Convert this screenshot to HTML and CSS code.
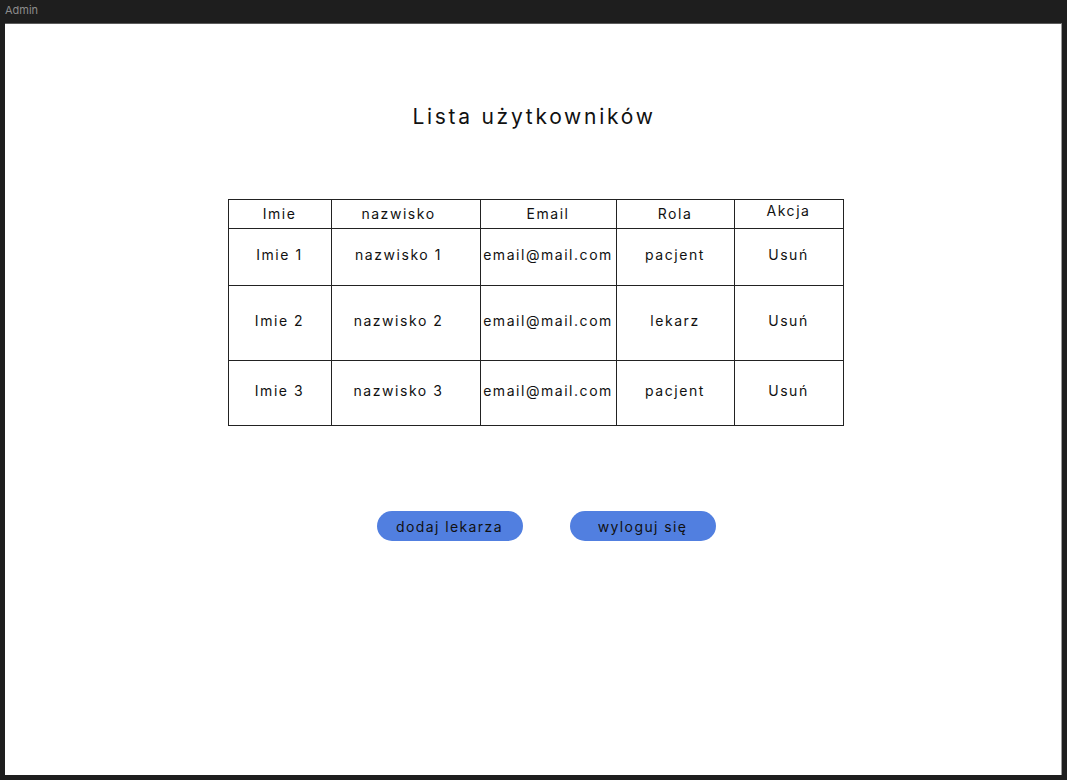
FILE: index.html
```html
<!DOCTYPE html>
<html lang="pl">
<head>
<meta charset="utf-8">
<title>Admin</title>
<link rel="stylesheet" href="styles.css">
</head>
<body>
<div class="label">Admin</div>
<main class="frame">
  <h1 class="title">Lista użytkowników</h1>
  <div class="table">
    <div class="cell head">Imie</div>
    <div class="cell head c2">nazwisko</div>
    <div class="cell head">Email</div>
    <div class="cell head">Rola</div>
    <div class="cell head up">Akcja</div>

    <div class="cell">Imie 1</div>
    <div class="cell c2">nazwisko 1</div>
    <div class="cell">email@mail.com</div>
    <div class="cell">pacjent</div>
    <div class="cell">Usuń</div>

    <div class="cell">Imie 2</div>
    <div class="cell c2">nazwisko 2</div>
    <div class="cell">email@mail.com</div>
    <div class="cell">lekarz</div>
    <div class="cell">Usuń</div>

    <div class="cell">Imie 3</div>
    <div class="cell c2">nazwisko 3</div>
    <div class="cell">email@mail.com</div>
    <div class="cell">pacjent</div>
    <div class="cell">Usuń</div>
  </div>
  <div class="actions">
    <button class="btn">dodaj lekarza</button>
    <button class="btn">wyloguj się</button>
  </div>
</main>
</body>
</html>
```

FILE: styles.css
```css
* { box-sizing: border-box; }
html, body { margin: 0; padding: 0; }
body {
  background: #1e1e1e;
  width: 1067px;
  height: 780px;
  overflow: hidden;
  font-family: Inter, "Noto Sans", sans-serif;
}
.label {
  height: 23px;
  padding: 4px 0 0 5px;
  font-size: 11px;
  color: #8c8c8c;
  line-height: 13px;
}
.frame {
  margin-left: 5px;
  width: 1057px;
  height: 752px;
  background: #fff;
  border-top: 1px solid #5c5c5c;
  border-right: 1px solid #9a9a9a;
  display: flex;
  flex-direction: column;
  align-items: center;
  padding-top: 77px;
}
.title {
  margin: 0;
  font-size: 21px;
  font-weight: 400;
  letter-spacing: 0.13em;
  color: #111;
  line-height: 32px;
  padding-left: 2px;
}
.table {
  margin-top: 66px;
  margin-left: 5px;
  display: grid;
  grid-template-columns: 103px 149px 136px 118px 109px;
  grid-template-rows: 29px 57px 75px 65px;
  border-top: 1px solid #222;
  border-left: 1px solid #222;
}
.cell {
  border-right: 1px solid #222;
  border-bottom: 1px solid #222;
  display: flex;
  align-items: center;
  justify-content: center;
  font-size: 14px;
  letter-spacing: 0.11em;
  color: #111;
  padding-bottom: 5px;
  white-space: nowrap;
}
.cell.head { padding-bottom: 2px; }
.cell.head.up { padding-bottom: 7px; }
.cell.c2 { padding-right: 14px; }
.actions {
  margin-top: 85px;
  margin-left: 26px;
  display: flex;
  gap: 47px;
}
.btn {
  width: 146px;
  height: 30px;
  border: none;
  border-radius: 15px;
  background: #517fe0;
  color: #111;
  font-family: Inter, "Noto Sans", sans-serif;
  font-size: 14px;
  letter-spacing: 0.1em;
  padding: 0;
  cursor: pointer;
}
```
